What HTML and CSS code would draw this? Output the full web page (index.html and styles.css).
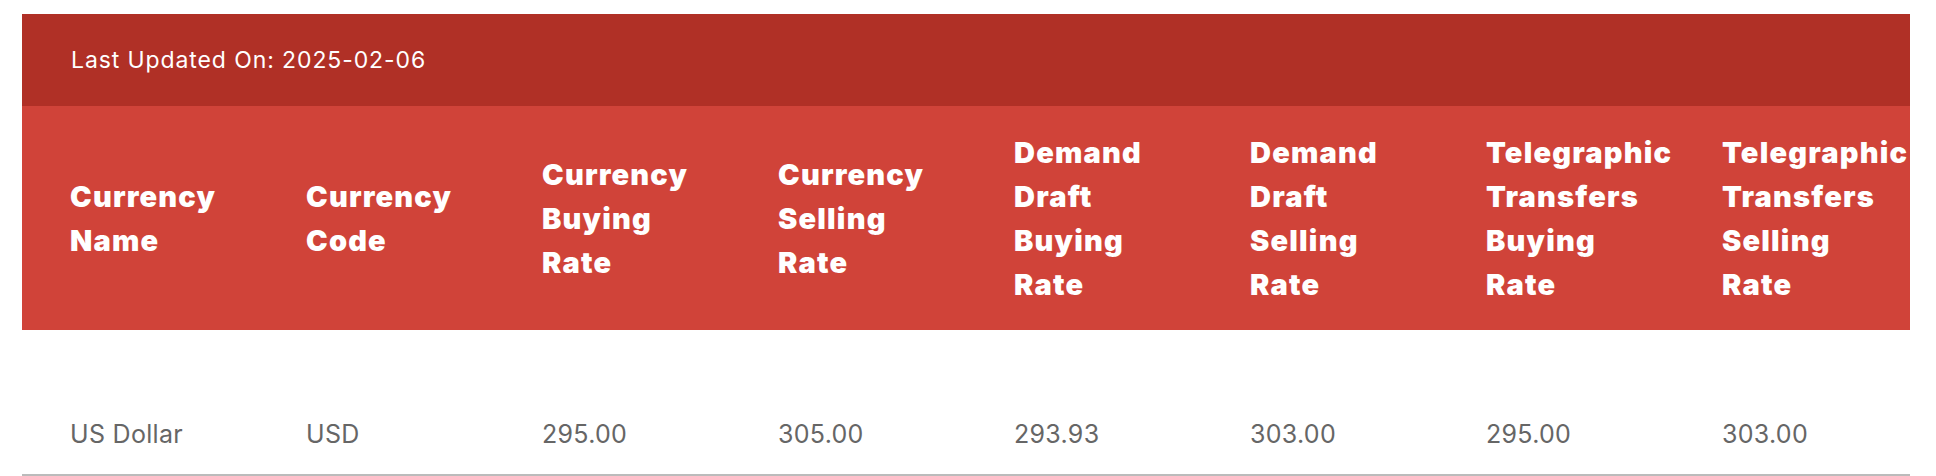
FILE: index.html
```html
<!DOCTYPE html>
<html lang="en">
<head>
<meta charset="utf-8">
<title>Exchange Rates</title>
<link rel="stylesheet" href="styles.css">
</head>
<body>
<div class="wrap">
  <div class="updated">Last Updated On: 2025-02-06</div>
  <table class="rates">
    <thead>
      <tr>
        <th>Currency Name</th>
        <th>Currency Code</th>
        <th>Currency Buying Rate</th>
        <th>Currency Selling Rate</th>
        <th>Demand Draft Buying Rate</th>
        <th>Demand Draft Selling Rate</th>
        <th>Telegraphic Transfers Buying Rate</th>
        <th>Telegraphic Transfers Selling Rate</th>
      </tr>
    </thead>
    <tbody>
      <tr>
        <td>US Dollar</td>
        <td>USD</td>
        <td>295.00</td>
        <td>305.00</td>
        <td>293.93</td>
        <td>303.00</td>
        <td>295.00</td>
        <td>303.00</td>
      </tr>
    </tbody>
  </table>
</div>
</body>
</html>
```

FILE: styles.css
```css
html, body {
  margin: 0;
  padding: 0;
  background: #ffffff;
}

.wrap {
  padding: 14px 26px 0 22px;
  font-family: Inter, "Noto Sans", sans-serif;
}

.updated {
  height: 92px;
  box-sizing: border-box;
  padding-left: 49px;
  display: flex;
  align-items: center;
  background: #b03026;
  color: #ffffff;
  font-size: 23px;
  letter-spacing: 0.9px;
  font-weight: 400;
}

.rates {
  width: 1888px;
  border-collapse: collapse;
  table-layout: fixed;
}

.rates th {
  background: #d04339;
  color: #ffffff;
  text-align: left;
  vertical-align: middle;
  padding: 25px 48px 23px 48px;
  font-size: 29px;
  line-height: 44px;
  font-weight: 900;
  letter-spacing: 1.2px;
  white-space: normal;
}

.rates td {
  padding: 84px 10px 20px 48px;
  font-size: 25px;
  line-height: 40px;
  letter-spacing: 0.3px;
  color: #666666;
  border-bottom: 2px solid #bbbbbb;
}
```
